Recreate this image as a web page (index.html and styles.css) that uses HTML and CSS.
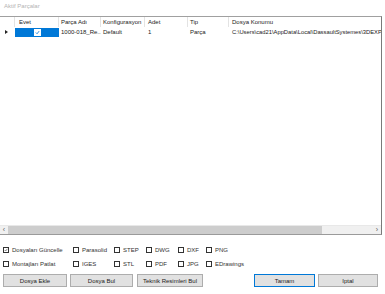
FILE: index.html
```html
<!DOCTYPE html>
<html>
<head>
    <title>Aktif Parçalar</title>
    <link rel="stylesheet" href="styles.css">
</head>
<body>
    <div class="baslik">Aktif Parçalar</div>

    <div class="tablo">
        <div class="satir baslik-satir">
            <div class="hucre c0"></div>
            <div class="hucre c1">Evet</div>
            <div class="hucre c2">Parça Adı</div>
            <div class="hucre c3">Konfigurasyon</div>
            <div class="hucre c4">Adet</div>
            <div class="hucre c5">Tip</div>
            <div class="hucre c6">Dosya Konumu</div>
        </div>
        <div class="satir veri-satir">
            <div class="hucre c0"><span class="ok"></span></div>
            <div class="hucre c1 secili">
                <span class="kutu isaretli">
                    <svg viewBox="0 0 6 6"><path d="M1 3 L2.5 4.5 L5 1.3" fill="none" stroke="#0078d7" stroke-width="1"/></svg>
                </span>
            </div>
            <div class="hucre c2">1000-018_Re...</div>
            <div class="hucre c3">Default</div>
            <div class="hucre c4">1</div>
            <div class="hucre c5">Parça</div>
            <div class="hucre c6 yol">C:\Users\cad21\AppData\Local\DassaultSystemes\3DEXP</div>
        </div>
        <div class="bosluk"></div>
        <div class="kaydirma">
            <span class="ok-tus">&lsaquo;</span>
            <span class="tutamak"></span>
            <span class="iz"></span>
            <span class="ok-tus">&rsaquo;</span>
        </div>
    </div>

    <div class="secenekler">
        <label class="secenek"><span class="kutu isaretli"><svg viewBox="0 0 6 6"><path d="M1 3 L2.5 4.5 L5 1.3" fill="none" stroke="#333" stroke-width="0.8"/></svg></span>Dosyaları Güncelle</label>
        <label class="secenek"><span class="kutu"></span>Parasolid</label>
        <label class="secenek"><span class="kutu"></span>STEP</label>
        <label class="secenek"><span class="kutu"></span>DWG</label>
        <label class="secenek"><span class="kutu"></span>DXF</label>
        <label class="secenek"><span class="kutu"></span>PNG</label>
        <label class="secenek"><span class="kutu"></span>Montajları Patlat</label>
        <label class="secenek"><span class="kutu"></span>IGES</label>
        <label class="secenek"><span class="kutu"></span>STL</label>
        <label class="secenek"><span class="kutu"></span>PDF</label>
        <label class="secenek"><span class="kutu"></span>JPG</label>
        <label class="secenek"><span class="kutu"></span>EDrawings</label>
    </div>

    <div class="butonlar">
        <button class="b1">Dosya Ekle</button>
        <button class="b2">Dosya Bul</button>
        <button class="b3">Teknik Resimleri Bul</button>
        <button class="b4 varsayilan">Tamam</button>
        <button class="b5">Iptal</button>
    </div>
</body>
</html>
```

FILE: styles.css
```css
body {
    margin: 0;
    width: 385px;
    height: 294px;
    background: #ffffff;
    font-family: 'Liberation Sans', Arial, sans-serif;
    font-size: 6px;
    color: #222;
    overflow: hidden;
}

.baslik {
    height: 16px;
    line-height: 12px;
    padding-left: 4px;
    color: #b4b4b4;
}

/* tablo */
.tablo {
    width: 381px;
    height: 217px;
    border-top: 1px solid #a0a0a0;
    border-right: 1px solid #7a7a7a;
    border-bottom: 1px solid #9a9a9a;
    display: flex;
    flex-direction: column;
}

.satir {
    display: flex;
}

.baslik-satir {
    height: 10px;
}

.veri-satir {
    height: 10px;
}

.hucre {
    padding-left: 2px;
    white-space: nowrap;
    overflow: hidden;
    box-sizing: border-box;
    display: flex;
    align-items: center;
}

.baslik-satir .hucre {
    border-right: 1px solid #e3e3e3;
}

.c0 { width: 15px; }
.c1 { width: 44px; padding-left: 4px; }
.c2 { width: 42px; }
.c3 { width: 44px; }
.c4 { width: 43px; padding-left: 3px; }
.c5 { width: 41px; }
.c6 { flex: 1; padding-left: 3px; }

.baslik-satir .c6 {
    border-right: none;
}

.yol {
    font-size: 5.8px;
}

.ok {
    width: 0;
    height: 0;
    margin-left: 3px;
    border-top: 2px solid transparent;
    border-bottom: 2px solid transparent;
    border-left: 3px solid #222;
}

.secili {
    background: #0078d7;
    justify-content: center;
    padding-left: 0;
    margin-top: 1px;
}

.kutu {
    width: 6px;
    height: 6px;
    border: 1px solid #333;
    background: #fff;
    box-sizing: border-box;
    display: inline-flex;
    flex-shrink: 0;
}

.kutu svg {
    width: 100%;
    height: 100%;
}

.secili .kutu {
    width: 7px;
    height: 7px;
    border-color: #fff;
}

.bosluk {
    flex: 1;
}

.kaydirma {
    height: 8px;
    display: flex;
    background: #f0f0f0;
    border-top: 1px solid #e8e8e8;
}

.ok-tus {
    width: 8px;
    line-height: 7px;
    text-align: center;
    color: #606060;
    font-size: 7px;
}

.tutamak {
    width: 314px;
    background: #cdcdcd;
}

.iz {
    flex: 1;
}

/* secenekler */
.secenekler {
    display: grid;
    grid-template-columns: 70px 41px 32px 32px 28px auto;
    grid-auto-rows: 14px;
    padding: 8px 0 0 3px;
}

.secenek {
    display: flex;
    align-items: center;
    gap: 3px;
    white-space: nowrap;
    color: #333;
}

/* butonlar */
.butonlar {
    display: flex;
    padding: 3px 0 0 3px;
    gap: 3px;
}

button {
    height: 13px;
    padding: 0;
    border: 1px solid #adadad;
    background: #e1e1e1;
    font-family: 'Liberation Sans', Arial, sans-serif;
    font-size: 6px;
    color: #222;
}

.b1 { width: 64px; }
.b2 { width: 63px; }
.b3 { width: 66px; margin-left: 1px; }
.b4 { width: 61px; margin-left: auto; }
.b5 { width: 60px; margin-right: 7px; }

.varsayilan {
    border-color: #0078d7;
}
```
